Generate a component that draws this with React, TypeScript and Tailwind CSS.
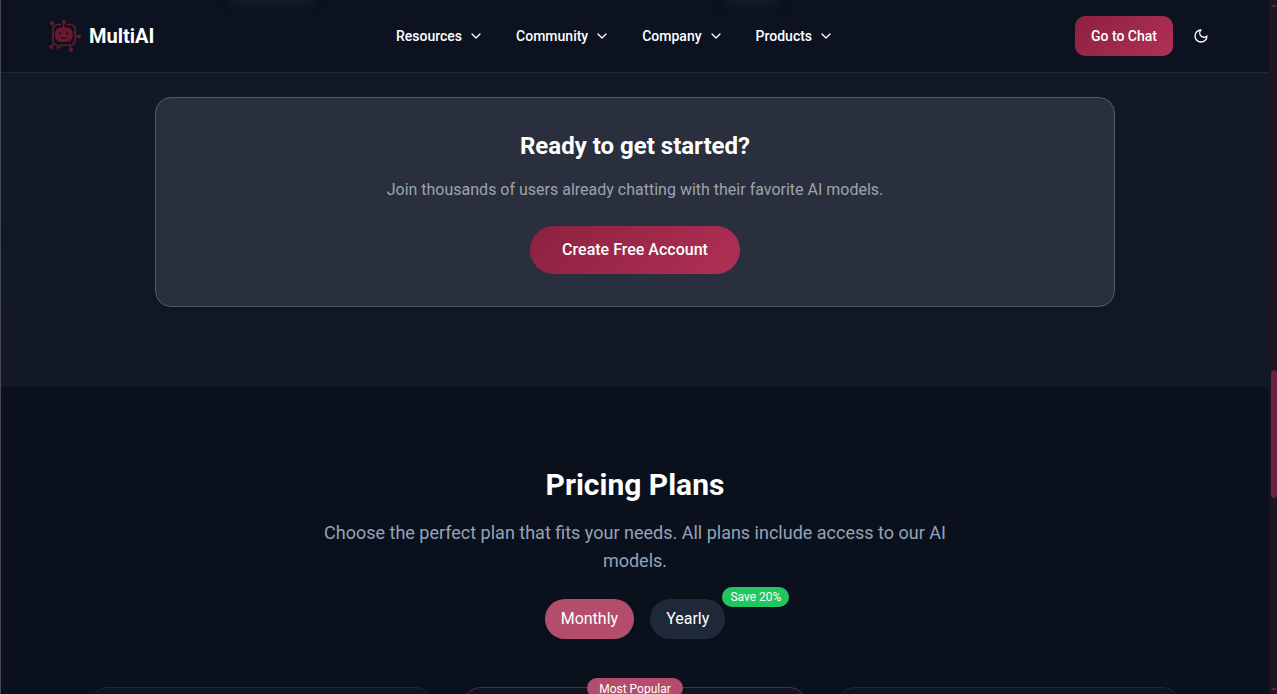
import React from "react";
import { ChevronDown } from "lucide-react";

function Logo() {
  return (
    <svg width="32" height="32" viewBox="0 0 32 32" fill="none" stroke="#6b1930" strokeWidth="1.6">
      <path d="M12.300 4.500H9.500C6.200 4.500 4 7 4 10v10.500c0 2.200 1.500 4.500 4.600 5v3.200l3.400-3.400h8.800c3 0 5.400-2.200 5.400-5V10c0-3-2.400-5.500-5.400-5.500h-3.300" />
      <path d="M14.700 2.500v5.500M4 5l1.800 1.500M26.200 16.400h4M4.800 24.500l-2.800 2.500M20.500 25.500l1.500 3.500" />
      <rect x="6" y="7.400" width="17.700" height="14.600" rx="6.200" fill="#6b1930" stroke="none" />
      <g fill="#6b1930" stroke="none">
        <circle cx="14.700" cy="1.900" r="1.900" />
        <circle cx="3" cy="3.300" r="2" />
        <circle cx="30" cy="16.400" r="2" />
        <circle cx="2" cy="27" r="2" />
        <circle cx="22" cy="29.700" r="2" />
      </g>
      <circle cx="11.200" cy="13.400" r="1.100" fill="#0c121f" stroke="none" />
      <circle cx="18.200" cy="13.400" r="1.100" fill="#0c121f" stroke="none" />
      <path d="M12 16.900c1.300 1.700 4.300 1.700 5.600 0" stroke="#0c121f" strokeWidth="1" />
    </svg>
  );
}

function MoonIcon() {
  return (
    <svg
      width="16"
      height="16"
      viewBox="0 0 24 24"
      fill="none"
      stroke="currentColor"
      strokeWidth="2"
      strokeLinecap="round"
      strokeLinejoin="round"
    >
      <path d="M12 3a6 6 0 0 0 9 9 9 9 0 1 1-9-9Z" />
    </svg>
  );
}

const menus = ["Resources", "Community", "Company", "Products"];

function Header() {
  return (
    <header className="relative flex h-[73px] shrink-0 items-center justify-between overflow-hidden border-b border-[#202938] bg-[#0c121f] px-12">
      <div className="absolute -top-2 left-[230px] h-3 w-[82px] bg-[#161d2b] blur-[5px]" />
      <div className="absolute -top-2 left-[724px] h-3 w-[54px] bg-[#161d2b] blur-[5px]" />
      <div className="flex w-[347px] items-center gap-2">
        <Logo />
        <span className="text-xl leading-7 font-bold">MultiAI</span>
      </div>
      <nav className="flex flex-1 items-center gap-8 text-sm font-medium">
        {menus.map((m) => (
          <span key={m} className="flex items-center gap-[6px]">
            {m}
            <ChevronDown size={16} />
          </span>
        ))}
      </nav>
      <div className="flex items-center gap-2">
        <button className="h-10 w-[98px] rounded-[10px] bg-linear-[135deg] from-[#8c2140] to-[#b03056] text-sm font-medium">
          Go to Chat
        </button>
        <button className="flex size-10 items-center justify-center">
          <MoonIcon />
        </button>
      </div>
    </header>
  );
}

function CallToAction() {
  return (
    <section className="flex h-[314px] shrink-0 justify-center bg-linear-to-b from-[#111827] to-[#121924] pt-6">
      <div className="flex h-[210px] w-[960px] flex-col items-center rounded-2xl border border-[#535965] bg-[#292f3c] p-8 shadow-[0_8px_12px_-3px_rgba(0,0,0,0.12)]">
        <h2 className="mb-4 text-2xl leading-8 font-bold">Ready to get started?</h2>
        <p className="mb-6 text-base leading-6 text-[#9ca3af]">
          Join thousands of users already chatting with their favorite AI models.
        </p>
        <button className="h-12 shrink-0 rounded-full bg-linear-[135deg] from-[#8c2140] to-[#b03056] px-8 text-base font-medium">
          Create Free Account
        </button>
      </div>
    </section>
  );
}

function Pricing() {
  return (
    <section className="flex flex-1 flex-col items-center bg-[#0a111d] pt-20">
      <h2 className="mb-4 text-3xl leading-9 font-bold">Pricing Plans</h2>
      <p className="mb-6 max-w-2xl text-center text-lg leading-7 text-[#94a3b8]">
        Choose the perfect plan that fits your needs. All plans include access to our AI models.
      </p>
      <div className="mb-12 flex gap-4 text-base">
        <button className="h-10 rounded-full bg-[#b44d6b] px-4">Monthly</button>
        <button className="relative h-10 rounded-full bg-[#1f293a] px-4">
          Yearly
          <span className="absolute -top-3 -right-16 flex h-5 items-center rounded-full bg-[#22c55e] px-2 text-xs whitespace-nowrap">
            Save 20%
          </span>
        </button>
      </div>
      <div className="grid w-[1088px] grid-cols-3 gap-8">
        <div className="h-[400px] rounded-2xl border border-[#1c2636] bg-[#0e1626]" />
        <div className="relative flex h-[400px] justify-center rounded-2xl border border-[#612840] bg-[#131421]">
          <span className="absolute -top-[10px] flex h-5 w-24 items-center justify-center rounded-full bg-[#b44d6b] pt-0.5 text-xs">
            Most Popular
          </span>
        </div>
        <div className="h-[400px] rounded-2xl border border-[#1c2636] bg-[#0e1626]" />
      </div>
    </section>
  );
}

function ScrollRail() {
  return (
    <div className="flex w-2 shrink-0 flex-col items-end bg-[#1e1322]">
      <svg width="6" height="8" viewBox="0 0 6 8" className="mb-[362px]">
        <path d="M0 7l3-3 3 3z" fill="#6b2140" />
      </svg>
      <div className="h-32 w-[6px] rounded-[3px] bg-[#6b2140]" />
      <svg width="6" height="8" viewBox="0 0 6 8" className="mt-auto">
        <path d="M0 2l3 3 3-3z" fill="#6b2140" />
      </svg>
    </div>
  );
}

export default function App() {
  return (
    <div className="flex h-[694px] w-[1277px] overflow-hidden border-l border-[#46484d] bg-[#0a101d] font-['Roboto',sans-serif] text-white">
      <main className="flex h-[694px] flex-1 flex-col overflow-hidden">
        <Header />
        <CallToAction />
        <Pricing />
      </main>
      <ScrollRail />
    </div>
  );
}
